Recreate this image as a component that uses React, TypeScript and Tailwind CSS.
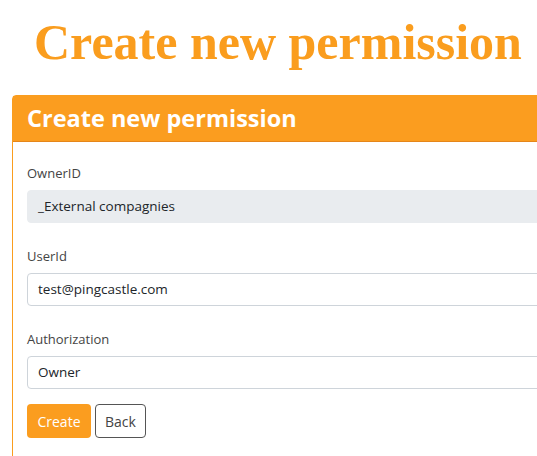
import React from 'react'

const fields = [
  { label: 'OwnerID', value: '_External compagnies', readOnly: true },
  { label: 'UserId', value: 'test@pingcastle.com', readOnly: false },
  { label: 'Authorization', value: 'Owner', readOnly: false },
]

export default function App() {
  return (
    <div className="w-[537px] h-[456px] overflow-hidden bg-white font-['Open_Sans',sans-serif]">
      {/* Page title */}
      <h1 className="pl-[34px] pt-[12px] h-[95px] font-['Liberation_Serif',serif] font-bold text-[50px] leading-[60px] text-[#fa9d1e] whitespace-nowrap">
        Create new permission
      </h1>

      {/* Card, runs off the right edge */}
      <div className="ml-[12px] w-[600px] border border-[#fa9d1e] rounded-t-[4px]">
        <div className="h-[46px] bg-[#fb9d1f] border-b border-[#e5861a] px-[14px] flex items-center">
          <h2 className="text-white font-bold text-[23.5px] leading-none">Create new permission</h2>
        </div>
        <div className="px-[14px] pt-[21px] pb-[20px]">
          {fields.map((f) => (
            <div key={f.label} className="mb-[23px]">
              <label className="block h-[20px] leading-[20px] text-[13px] text-[#444] mb-[7px]">{f.label}</label>
              <div
                className={`h-[33px] flex items-center px-[10px] text-[13.5px] text-[#212529] border rounded-[4px] ${
                  f.readOnly ? 'bg-[#e9ecef] border-[#e9ecef]' : 'bg-white border-[#ced4da]'
                }`}
              >
                {f.value}
              </div>
            </div>
          ))}
          <div className="flex gap-[4px] -mt-[8px]">
            <button className="h-[34px] w-[64px] rounded-[4px] bg-[#fb9d1f] text-white text-[14px]">Create</button>
            <button className="h-[34px] w-[51px] rounded-[4px] border border-[#555] text-[#444] text-[14px] bg-white">Back</button>
          </div>
        </div>
      </div>
    </div>
  )
}
